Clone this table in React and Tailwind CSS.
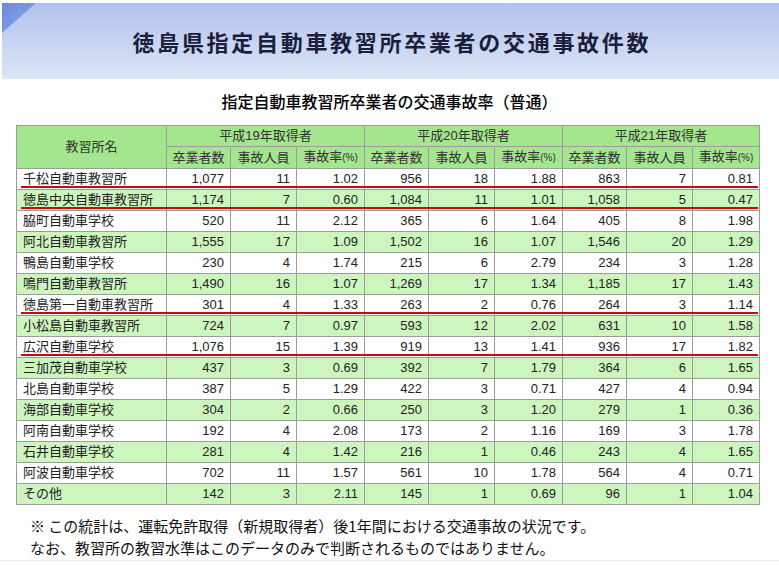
const rows = [
  ["千松自動車教習所", "1,077", "11", "1.02", "956", "18", "1.88", "863", "7", "0.81", true],
  ["徳島中央自動車教習所", "1,174", "7", "0.60", "1,084", "11", "1.01", "1,058", "5", "0.47", true],
  ["脇町自動車学校", "520", "11", "2.12", "365", "6", "1.64", "405", "8", "1.98"],
  ["阿北自動車教習所", "1,555", "17", "1.09", "1,502", "16", "1.07", "1,546", "20", "1.29"],
  ["鴨島自動車学校", "230", "4", "1.74", "215", "6", "2.79", "234", "3", "1.28"],
  ["鳴門自動車教習所", "1,490", "16", "1.07", "1,269", "17", "1.34", "1,185", "17", "1.43"],
  ["徳島第一自動車教習所", "301", "4", "1.33", "263", "2", "0.76", "264", "3", "1.14", true],
  ["小松島自動車教習所", "724", "7", "0.97", "593", "12", "2.02", "631", "10", "1.58"],
  ["広沢自動車学校", "1,076", "15", "1.39", "919", "13", "1.41", "936", "17", "1.82", true],
  ["三加茂自動車学校", "437", "3", "0.69", "392", "7", "1.79", "364", "6", "1.65"],
  ["北島自動車学校", "387", "5", "1.29", "422", "3", "0.71", "427", "4", "0.94"],
  ["海部自動車学校", "304", "2", "0.66", "250", "3", "1.20", "279", "1", "0.36"],
  ["阿南自動車学校", "192", "4", "2.08", "173", "2", "1.16", "169", "3", "1.78"],
  ["石井自動車学校", "281", "4", "1.42", "216", "1", "0.46", "243", "4", "1.65"],
  ["阿波自動車学校", "702", "11", "1.57", "561", "10", "1.78", "564", "4", "0.71"],
  ["その他", "142", "3", "2.11", "145", "1", "0.69", "96", "1", "1.04"],
];

const years = ["平成19年取得者", "平成20年取得者", "平成21年取得者"];
const subs = ["卒業者数", "事故人員", "事故率(%)"];
const widths = [150, 64, 66, 68, 64, 66, 68, 64, 66, 67];

const cell = "border border-[#9c9c9c] h-[21px] p-0 leading-[20px]";

export default function App() {
  return (
    <div
      className="w-[779px] h-[565px] bg-white overflow-hidden text-[#222]"
      style={{ fontFamily: '"Liberation Sans", "Noto Sans CJK JP", sans-serif' }}
    >
      {/* banner */}
      <div className="relative mt-[3px] ml-[2px] h-[76px] bg-gradient-to-b from-[#b3c2ed] to-[#dde5f6] flex items-center justify-center">
        <svg className="absolute top-0 left-0" width="34" height="30" viewBox="0 0 34 30">
          <defs>
            <linearGradient id="tri" x1="0" y1="0" x2="1" y2="1">
              <stop offset="0" stopColor="#6a8cdc" />
              <stop offset="1" stopColor="#8aa6e6" />
            </linearGradient>
          </defs>
          <polygon points="0,0 34,0 0,30" fill="url(#tri)" />
        </svg>
        <h1
          className="text-[22px] font-bold tracking-[2.7px] text-[#1b1f3c] leading-none mr-[-2.7px]"
          style={{ fontFamily: '"Noto Sans CJK JP", sans-serif' }}
        >
          徳島県指定自動車教習所卒業者の交通事故件数
        </h1>
      </div>

      <h2
        className="mt-[12px] text-center text-[16px] font-medium leading-[20px] text-black"
        style={{ fontFamily: '"Noto Sans CJK JP", sans-serif' }}
      >
        指定自動車教習所卒業者の交通事故率（普通）
      </h2>

      <table className="mt-[14px] ml-[16px] border-collapse table-fixed w-[743px] text-[13px]">
        <colgroup>
          {widths.map((w, i) => (
            <col key={i} style={{ width: w }} />
          ))}
        </colgroup>
        <thead className="bg-[#a3e68d] text-[#333]">
          <tr>
            <th rowSpan={2} className={`${cell} font-normal text-center`}>教習所名</th>
            {years.map((y) => (
              <th key={y} colSpan={3} className={`${cell} font-normal text-center`}>{y}</th>
            ))}
          </tr>
          <tr>
            {years.map((y) =>
              subs.map((s) => (
                <th key={y + s} className={`${cell} font-normal text-center`}>
                  {s === "事故率(%)" ? (
                    <>事故率<span className="text-[10px]">(%)</span></>
                  ) : (
                    s
                  )}
                </th>
              ))
            )}
          </tr>
        </thead>
        <tbody>
          {rows.map((r, i) => (
            <tr key={r[0]} className={i % 2 === 1 ? "bg-[#cdf6bf]" : "bg-white"}>
              <td className={`${cell} relative pl-[6px] text-left`}>
                {r[0]}
                {r[10] && (
                  <span className="absolute left-[4px] bottom-[1px] w-[737px] h-[2px] bg-[#c80a0a] z-10" />
                )}
              </td>
              {r.slice(1, 10).map((v, j) => (
                <td key={j} className={`${cell} text-right pr-[6px]`}>{v}</td>
              ))}
            </tr>
          ))}
        </tbody>
      </table>

      <div
        className="mt-[10px] pl-[30px] text-[15px] leading-[22px] text-[#111]"
        style={{ fontFamily: '"Noto Sans CJK JP", sans-serif' }}
      >
        <p>※ この統計は、運転免許取得（新規取得者）後1年間における交通事故の状況です。</p>
        <p>なお、教習所の教習水準はこのデータのみで判断されるものではありません。</p>
      </div>
      <div className="mt-[1px] h-px bg-[#ececec]" />
    </div>
  );
}
